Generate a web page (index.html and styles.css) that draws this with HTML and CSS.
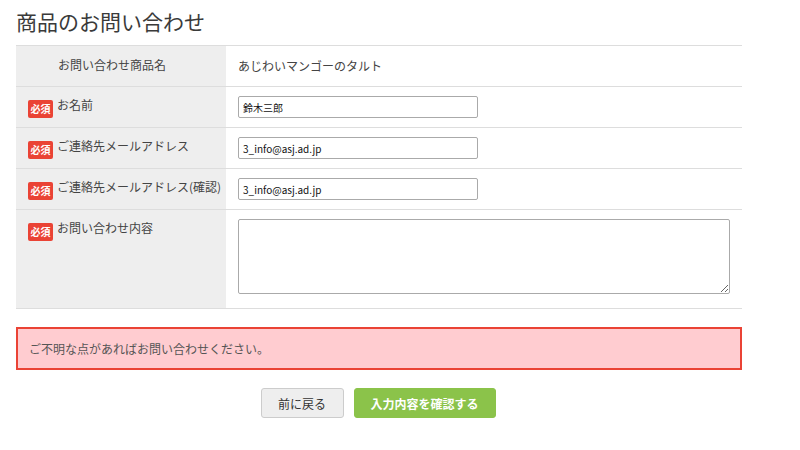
FILE: index.html
```html
<!DOCTYPE html>
<html lang="ja">
<head>
<meta charset="utf-8">
<link rel="stylesheet" href="styles.css">
</head>
<body>
<div class="page">
  <h1 class="title">商品のお問い合わせ</h1>
  <div class="form">
    <div class="row row-short">
      <div class="label label-plain">お問い合わせ商品名</div>
      <div class="value value-text">あじわいマンゴーのタルト</div>
    </div>
    <div class="row">
      <div class="label"><span class="badge">必須</span>お名前</div>
      <div class="value"><input class="field" type="text" value="鈴木三郎"></div>
    </div>
    <div class="row">
      <div class="label"><span class="badge">必須</span>ご連絡先メールアドレス</div>
      <div class="value"><input class="field" type="text" value="3_info@asj.ad.jp"></div>
    </div>
    <div class="row">
      <div class="label"><span class="badge">必須</span>ご連絡先メールアドレス(確認)</div>
      <div class="value"><input class="field" type="text" value="3_info@asj.ad.jp"></div>
    </div>
    <div class="row row-tall">
      <div class="label"><span class="badge">必須</span>お問い合わせ内容</div>
      <div class="value value-area"><textarea class="area"></textarea></div>
    </div>
  </div>
  <div class="notice">ご不明な点があればお問い合わせください。</div>
  <div class="actions">
    <button class="btn btn-back" type="button">前に戻る</button>
    <button class="btn btn-confirm" type="button">入力内容を確認する</button>
  </div>
</div>
</body>
</html>
```

FILE: styles.css
```css
* { box-sizing: border-box; }
html, body { margin: 0; padding: 0; background: #fff; }
body {
  font-family: "Noto Sans CJK JP", "Noto Sans", "Liberation Sans", sans-serif;
  color: #444;
  font-size: 12px;
}
.page {
  width: 726px;
  margin-left: 16px;
}
.title {
  margin: 0;
  height: 45px;
  padding-top: 6px;
  font-size: 21px;
  line-height: 30px;
  font-weight: normal;
  color: #3a3a3a;
}
.form {
  border-top: 1px solid #ddd;
}
.row {
  display: flex;
  height: 41px;
  border-bottom: 1px solid #ddd;
}
.row-tall { height: 99px; }
.label {
  width: 210px;
  flex: none;
  background: #eee;
  padding: 10px 0 0 12px;
  display: flex;
  align-items: flex-start;
  gap: 4px;
  line-height: 16px;
  font-size: 12px;
  color: #444;
}
.label-plain {
  padding: 0 0 2px 42px;
  align-items: center;
}
.badge {
  flex: none;
  display: inline-flex;
  align-items: center;
  justify-content: center;
  width: 25px;
  height: 18px;
  margin-top: 3px;
  background: #ea4335;
  color: #fff;
  font-size: 10px;
  font-weight: bold;
  border-radius: 2px;
  line-height: 1;
}
.value {
  flex: 1;
  padding: 9px 12px 0 12px;
}
.value-text {
  display: flex;
  align-items: center;
  padding-top: 0;
  padding-bottom: 2px;
  color: #444;
}
.value-area { padding-top: 9px; }
.field {
  display: block;
  width: 240px;
  height: 22px;
  border: 1px solid #aaa;
  border-radius: 2px;
  padding: 0 4px;
  font-family: "Noto Sans CJK JP", "Noto Sans", "Liberation Sans", sans-serif;
  font-size: 10px;
  color: #111;
  background: #fff;
}
.area {
  display: block;
  width: 492px;
  height: 75px;
  border: 1px solid #aaa;
  border-radius: 2px;
  margin: 0;
  resize: both;
  background: #fff;
}
.notice {
  margin-top: 18px;
  height: 43px;
  border: 2px solid #ea4335;
  background: #ffccd0;
  padding-left: 11px;
  display: flex;
  align-items: center;
  color: #555;
  font-size: 12px;
}
.actions {
  display: flex;
  justify-content: center;
  gap: 10px;
  margin-top: 18px;
  padding-right: 2px;
}
.btn {
  font-family: "Noto Sans CJK JP", "Noto Sans", "Liberation Sans", sans-serif;
  font-size: 12px;
  height: 30px;
  border-radius: 3px;
  padding: 0;
  cursor: pointer;
}
.btn-back {
  width: 83px;
  background: #eee;
  border: 1px solid #ccc;
  color: #333;
}
.btn-confirm {
  width: 142px;
  background: #8bc34a;
  border: 1px solid #8bc34a;
  color: #fff;
  font-weight: bold;
}
```
